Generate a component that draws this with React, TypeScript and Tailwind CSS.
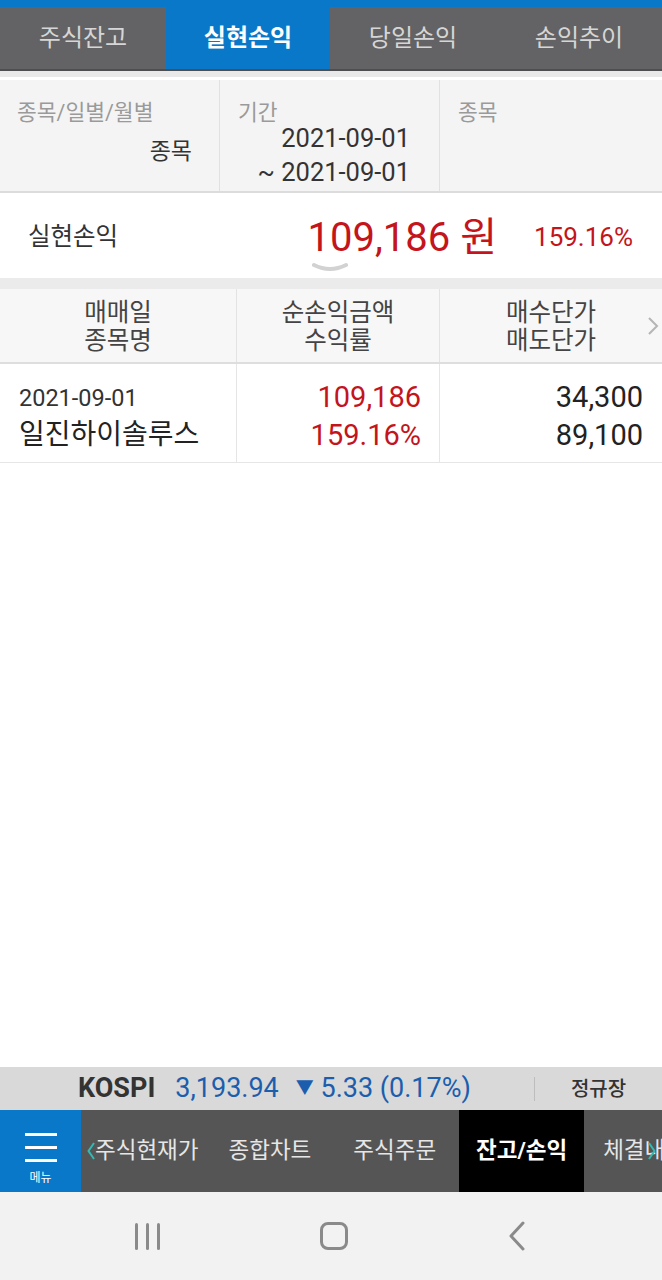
import React from "react";

const F = { fontFamily: 'Roboto, "Noto Sans CJK KR", "Noto Sans", sans-serif' };

function Tabs() {
  const tabs = ["주식잔고", "실현손익", "당일손익", "손익추이"];
  return (
    <div className="bg-[#0a78c8] pt-[7px]">
      <div className="flex h-[64px] bg-[#636365] border-b-2 border-[#4e4e50]">
        {tabs.map((t, i) => (
          <div
            key={t}
            className={
              i === 1
                ? "w-[164px] flex items-center justify-center bg-[#0a78c8] text-white font-bold text-[24px]"
                : "flex-1 flex items-center justify-center text-[#d6d6d6] text-[24px]"
            }
          >
            {t}
          </div>
        ))}
      </div>
    </div>
  );
}

function Filter() {
  return (
    <div className="flex h-[116px] bg-[#f4f4f4] border-t-[3px] border-white border-b-2 border-b-[#dcdcdc]">
      <div className="w-[220px] border-r border-[#e1e1e1] pt-[21px] flex flex-col">
        <div className="pl-[17px] text-[21.5px] leading-[24px] text-[#9a9a9a]">종목/일별/월별</div>
        <div className="pr-[27px] mt-[10px] text-right text-[23px] leading-[34px] text-[#333]">종목</div>
      </div>
      <div className="w-[220px] border-r border-[#e1e1e1] pt-[21px] flex flex-col">
        <div className="pl-[18px] text-[21.5px] leading-[24px] text-[#9a9a9a]">기간</div>
        <div className="mt-[-4px] pr-[29px] text-right text-[25.5px] leading-[34px] text-[#333]">2021-09-01</div>
        <div className="pr-[29px] text-right text-[25.5px] leading-[34px] text-[#333]">~ 2021-09-01</div>
      </div>
      <div className="flex-1 pt-[21px]">
        <div className="pl-[18px] text-[21.5px] leading-[24px] text-[#9a9a9a]">종목</div>
      </div>
    </div>
  );
}

function Summary() {
  return (
    <div className="relative h-[85px] bg-white flex items-center pt-[4px]">
      <div className="pl-[28px] text-[24.5px] text-[#333]">실현손익</div>
      <div className="ml-auto flex items-center pr-[29px]">
        <span className="text-[40px] leading-none text-[#c4141c]">109,186 원</span>
        <span className="ml-[37px] text-[26px] text-[#c4141c]">159.16%</span>
      </div>
      <svg className="absolute left-[311px] top-[69px]" width="38" height="10" viewBox="0 0 38 10">
        <path d="M3 3 Q19 11 35 3" fill="none" stroke="#d2d2d2" strokeWidth="4" strokeLinecap="round" />
      </svg>
    </div>
  );
}

function Table() {
  return (
    <div>
      <div className="h-[11px] bg-[#ebebeb]" />
      <div className="relative flex h-[75px] bg-[#f7f7f7] border-b-2 border-[#dedede] text-[24.5px] leading-[28px] text-[#444]">
        <div className="w-[237px] border-r border-[#e3e3e3] pt-[10px] text-center">
          <div>매매일</div>
          <div>종목명</div>
        </div>
        <div className="w-[203px] border-r border-[#e3e3e3] pt-[10px] text-center">
          <div>순손익금액</div>
          <div>수익률</div>
        </div>
        <div className="flex-1 pt-[10px] text-center">
          <div>매수단가</div>
          <div>매도단가</div>
        </div>
        <svg className="absolute right-[3px] top-[27px]" width="12" height="20" viewBox="0 0 12 20">
          <path d="M2 2 L10 10 L2 18" fill="none" stroke="#b5b5b5" strokeWidth="2" />
        </svg>
      </div>
      <div className="flex h-[99px] bg-white border-b border-[#e6e6e6]">
        <div className="w-[237px] border-r border-[#e6e6e6] pl-[19px] pt-[19px]">
          <div className="text-[23.5px] leading-[30px] text-[#333]">2021-09-01</div>
          <div className="mt-[4px] text-[28px] leading-[36px] text-[#222]">일진하이솔루스</div>
        </div>
        <div className="w-[203px] border-r border-[#e6e6e6] pr-[18px] pt-[14px] text-right text-[29px] leading-[38px] text-[#c4141c]">
          <div>109,186</div>
          <div>159.16%</div>
        </div>
        <div className="flex-1 pr-[19px] pt-[14px] text-right text-[29px] leading-[38px] text-[#222]">
          <div>34,300</div>
          <div>89,100</div>
        </div>
      </div>
    </div>
  );
}

function Kospi() {
  return (
    <div className="h-[43px] bg-[#d9d9d9] flex items-center pl-[78px] whitespace-nowrap">
      <span className="text-[27px] font-bold text-[#333]">KOSPI</span>
      <span className="ml-[20px] text-[27px] text-[#1b5eae]">3,193.94</span>
      <span className="ml-[17px] text-[27px] text-[#1b5eae]">
        <span className="text-[18px] align-[3px]">▼</span> 5.33 (0.17%)
      </span>
      <div className="ml-[63px] w-px h-[24px] bg-[#bdbdbd]" />
      <span className="ml-[36px] text-[20px] font-medium text-[#333]">정규장</span>
    </div>
  );
}

function BottomNav() {
  return (
    <div className="flex h-[82px] bg-[#555555] overflow-hidden">
      <div className="w-[81px] shrink-0 bg-[#0a78c8] flex flex-col items-center pt-[23px]">
        <div className="w-[32px] h-[3px] bg-white" />
        <div className="w-[32px] h-[3px] bg-white mt-[10px]" />
        <div className="w-[32px] h-[3px] bg-white mt-[10px]" />
        <div className="mt-[9px] text-[12px] leading-[14px] text-white">메뉴</div>
      </div>
      <div className="relative flex-1 flex items-center text-[22.5px] text-[#e6e6e6] whitespace-nowrap overflow-hidden">
        <svg className="ml-[6px] shrink-0" width="8" height="18" viewBox="0 0 8 18">
          <path d="M7 1 L1.5 9 L7 17" fill="none" stroke="#33b9b4" strokeWidth="2" />
        </svg>
        <span>주식현재가</span>
        <span className="ml-[30px]">종합차트</span>
        <span className="ml-[42px]">주식주문</span>
        <div className="ml-[23px] h-full w-[125px] shrink-0 bg-black flex items-center justify-center font-bold text-white">
          잔고/손익
        </div>
        <span className="ml-[19px]">체결내역</span>
        <svg className="absolute right-[6px] top-[32px]" width="8" height="18" viewBox="0 0 8 18">
          <path d="M1 1 L6.5 9 L1 17" fill="none" stroke="#33b9b4" strokeWidth="2" />
        </svg>
      </div>
    </div>
  );
}

function AndroidNav() {
  return (
    <div className="h-[88px] bg-[#f2f2f2] flex items-center pl-[135px]">
      <div className="flex items-center justify-between w-[25px]">
        <div className="w-[3px] h-[27px] rounded bg-[#8a8a8a]" />
        <div className="w-[3px] h-[27px] rounded bg-[#8a8a8a]" />
        <div className="w-[3px] h-[27px] rounded bg-[#8a8a8a]" />
      </div>
      <div className="ml-[160px] w-[28px] h-[28px] rounded-[8px] border-[3px] border-[#8a8a8a]" />
      <svg className="ml-[160px]" width="18" height="30" viewBox="0 0 18 30">
        <path d="M15 2 L3 15 L15 28" fill="none" stroke="#8a8a8a" strokeWidth="3" strokeLinecap="round" strokeLinejoin="round" />
      </svg>
    </div>
  );
}

export default function App() {
  return (
    <div className="w-[662px] h-[1280px] flex flex-col bg-white overflow-hidden" style={F}>
      <Tabs />
      <div className="h-[6px] bg-[#e9e9e9]" />
      <Filter />
      <Summary />
      <Table />
      <div className="flex-1 bg-white" />
      <Kospi />
      <BottomNav />
      <AndroidNav />
    </div>
  );
}
